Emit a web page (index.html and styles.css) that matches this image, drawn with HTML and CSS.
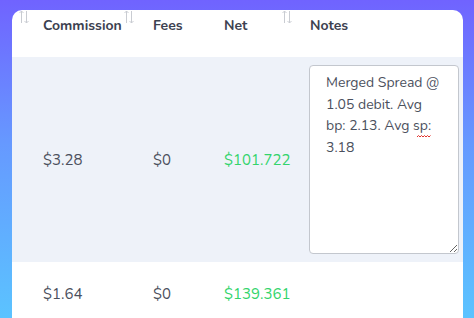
FILE: index.html
```html
<!DOCTYPE html>
<html>
<head>
<meta charset="utf-8">
<link rel="stylesheet" href="styles.css">
</head>
<body>
<div class="card">
  <table class="grid">
    <thead>
      <tr>
        <th class="c0"><span class="sort s0"><svg width="10" height="14" viewBox="0 0 10 14"><path d="M2.5 13V1M0.5 3L2.5 1L4.5 3M7.5 1V13M5.5 11L7.5 13L9.5 11" fill="none" stroke="#c9ccd2" stroke-width="1"/></svg></span></th>
        <th class="c1">Commission<span class="sort s1"><svg width="10" height="14" viewBox="0 0 10 14"><path d="M2.5 13V1M0.5 3L2.5 1L4.5 3M7.5 1V13M5.5 11L7.5 13L9.5 11" fill="none" stroke="#c9ccd2" stroke-width="1"/></svg></span></th>
        <th class="c2">Fees</th>
        <th class="c3">Net<span class="sort s3"><svg width="10" height="14" viewBox="0 0 10 14"><path d="M2.5 13V1M0.5 3L2.5 1L4.5 3M7.5 1V13M5.5 11L7.5 13L9.5 11" fill="none" stroke="#c9ccd2" stroke-width="1"/></svg></span></th>
        <th class="c4">Notes</th>
      </tr>
    </thead>
    <tbody>
      <tr class="alt">
        <td class="c0"></td>
        <td class="c1">$3.28</td>
        <td class="c2">$0</td>
        <td class="c3 pos">$101.722</td>
        <td class="c4 notes"><textarea class="note" spellcheck="false">Merged Spread @ 1.05 debit. Avg bp: 2.13. Avg sp: 3.18</textarea><span class="squiggle"><svg width="14" height="3" viewBox="0 0 14 3"><path d="M0 2L1.5 0.5L3 2L4.5 0.5L6 2L7.5 0.5L9 2L10.5 0.5L12 2L13.5 0.5" fill="none" stroke="#e0322c" stroke-width="1"/></svg></span></td>
      </tr>
      <tr class="plain">
        <td class="c0"></td>
        <td class="c1">$1.64</td>
        <td class="c2">$0</td>
        <td class="c3 pos">$139.361</td>
        <td class="c4"></td>
      </tr>
    </tbody>
  </table>
</div>
</body>
</html>
```

FILE: styles.css
```css
html, body {
  margin: 0;
  padding: 0;
  height: 318px;
  overflow: hidden;
}
body {
  background: linear-gradient(180deg, #7063ff 0%, #6699ff 45%, #5bc3ff 100%);
  font-family: "Nunito", "Lato", "Open Sans", sans-serif;
  color: #4b505d;
}
.card {
  margin: 10px 11px 0 12px;
  background: #fff;
  border-radius: 10px 10px 0 0;
  overflow: hidden;
  height: 320px;
}
.grid {
  border-collapse: collapse;
  table-layout: fixed;
  width: 451px;
}
.grid th, .grid td {
  padding: 0 0 0 12px;
  text-align: left;
  vertical-align: middle;
  position: relative;
}
.grid th {
  height: 41px;
  padding-top: 6px;
  vertical-align: top;
  font-size: 14px;
  line-height: 19px;
  font-weight: 700;
  color: #3c4150;
}
.grid td {
  font-size: 15px;
}
.c0 { width: 7px; }
.c1 { width: 98px; }
.c2 { width: 59px; }
.c3 { width: 74px; }
.c4 { width: 149px; }
.grid .c4 { padding-right: 4px; }
.sort {
  position: absolute;
  top: 0;
  line-height: 0;
}
.s0 { right: 2px; }
.s1 { right: 7px; }
.s3 { right: 6px; }
.alt td { background: #eef2f9; }
.notes { padding-top: 8px !important; padding-bottom: 8px !important; }
.plain td { height: 64px; }
.pos { color: #33d46c; }
.note {
  display: block;
  box-sizing: border-box;
  width: 150px;
  height: 189px;
  margin-left: -1px;
  padding: 6px 17px 6px 16px;
  border: 1px solid #c3c7ce;
  border-radius: 4px;
  background: #fff;
  font-family: "Nunito", "Lato", "Open Sans", sans-serif;
  font-size: 14px;
  line-height: 21.5px;
  color: #4b505d;
  resize: both;
}
.squiggle {
  position: absolute;
  left: 119px;
  top: 76px;
  line-height: 0;
}
```
